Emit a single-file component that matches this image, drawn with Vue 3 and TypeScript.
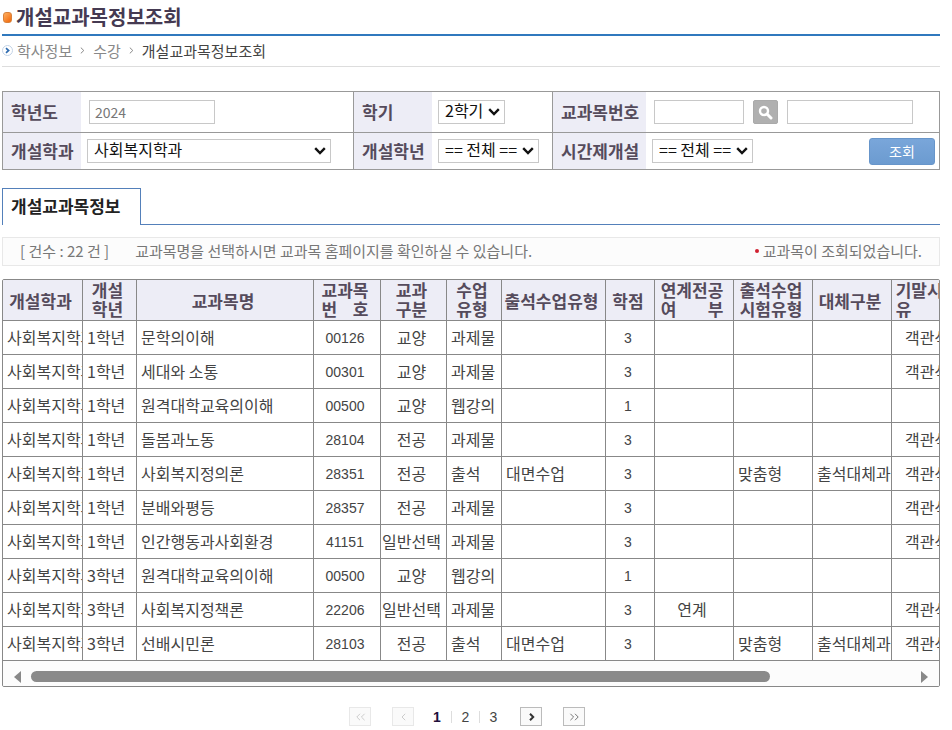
<script setup lang="ts">
import { computed, ref } from 'vue'

interface Course {
  dept: string
  grade: string
  name: string
  code: string
  category: string
  type: string
  attend: string
  credit: string
  linked: string
  exam: string
  substitute: string
  final: string
}

const DEPT = '사회복지학과'

function course(
  grade: string, name: string, code: string, category: string, type: string,
  attend: string, credit: string, linked: string, exam: string, substitute: string, final: string,
): Course {
  return { dept: DEPT, grade, name, code, category, type, attend, credit, linked, exam, substitute, final }
}

const courses: Course[] = [
  course('1학년', '문학의이해', '00126', '교양', '과제물', '', '3', '', '', '', '객관식'),
  course('1학년', '세대와 소통', '00301', '교양', '과제물', '', '3', '', '', '', '객관식'),
  course('1학년', '원격대학교육의이해', '00500', '교양', '웹강의', '', '1', '', '', '', ''),
  course('1학년', '돌봄과노동', '28104', '전공', '과제물', '', '3', '', '', '', '객관식'),
  course('1학년', '사회복지정의론', '28351', '전공', '출석', '대면수업', '3', '', '맞춤형', '출석대체과제물', '객관식'),
  course('1학년', '분배와평등', '28357', '전공', '과제물', '', '3', '', '', '', '객관식'),
  course('1학년', '인간행동과사회환경', '41151', '일반선택', '과제물', '', '3', '', '', '', '객관식'),
  course('3학년', '원격대학교육의이해', '00500', '교양', '웹강의', '', '1', '', '', '', ''),
  course('3학년', '사회복지정책론', '22206', '일반선택', '과제물', '', '3', '연계', '', '', '객관식'),
  course('3학년', '선배시민론', '28103', '전공', '출석', '대면수업', '3', '', '맞춤형', '출석대체과제물', '객관식'),
]

interface Column {
  key: keyof Course
  lines: string[]
  width: number
  justify?: boolean
  center?: boolean
  digits?: boolean
}

const columns: Column[] = [
  { key: 'dept', lines: ['개설학과'], width: 80 },
  { key: 'grade', lines: ['개설', '학년'], width: 54 },
  { key: 'name', lines: ['교과목명'], width: 177 },
  { key: 'code', lines: ['교과목', '번 호'], width: 67, justify: true, center: true, digits: true },
  { key: 'category', lines: ['교과', '구분'], width: 66, center: true },
  { key: 'type', lines: ['수업', '유형'], width: 55 },
  { key: 'attend', lines: ['출석수업유형'], width: 104 },
  { key: 'credit', lines: ['학점'], width: 49, center: true, digits: true },
  { key: 'linked', lines: ['연계전공', '여 부'], width: 79, justify: true, center: true },
  { key: 'exam', lines: ['출석수업', '시험유형'], width: 79 },
  { key: 'substitute', lines: ['대체구분'], width: 79 },
  { key: 'final', lines: ['기말시험', '유 형'], width: 75, justify: true, center: true },
]
const tableWidth = computed(() => columns.reduce((sum, c) => sum + c.width, 0))

const year = ref('2024')
const code = ref('')
const courseName = ref('')
const page = ref(1)
const viewport = ref<HTMLElement | null>(null)

function scrollTable(dx: number) {
  viewport.value?.scrollBy({ left: dx })
}
</script>

<template>
  <main class="page">
    <header>
      <h1 class="title"><span class="bullet"></span>개설교과목정보조회</h1>
      <nav class="crumbs" aria-label="현재 위치">
        <svg class="crumb-icon" width="11" height="11" viewBox="0 0 11 11" aria-hidden="true">
          <circle cx="5.5" cy="5.5" r="5" fill="#fff" stroke="#c3d3e6" />
          <path d="M4 3.2 6.6 5.5 4 7.8" fill="none" stroke="#2f6cb0" stroke-width="1.7" />
        </svg>
        <a href="#">학사정보</a>
        <svg class="sep" width="5" height="7" viewBox="0 0 5 7" aria-hidden="true"><path d="M.8.6 3.8 3.5.8 6.4" /></svg>
        <a href="#">수강</a>
        <svg class="sep" width="5" height="7" viewBox="0 0 5 7" aria-hidden="true"><path d="M.8.6 3.8 3.5.8 6.4" /></svg>
        <span class="current">개설교과목정보조회</span>
      </nav>
    </header>

    <form class="search" @submit.prevent>
      <div class="row first">
        <div class="field">
          <label for="year">학년도</label>
          <div class="control"><input id="year" v-model="year" class="text wide" type="text"></div>
        </div>
        <div class="field">
          <label for="term">학기</label>
          <div class="control"><select id="term" class="term"><option>2학기</option></select></div>
        </div>
        <div class="field long">
          <label for="code">교과목번호</label>
          <div class="control">
            <input id="code" v-model="code" class="text short" type="text">
            <button class="find" type="button" aria-label="검색">
              <svg width="15" height="15" viewBox="0 0 15 15" aria-hidden="true">
                <circle cx="6" cy="6" r="4" fill="none" stroke="#fff" stroke-width="2.4" />
                <path d="M9 9 13 13" stroke="#fff" stroke-width="3" stroke-linecap="round" />
              </svg>
            </button>
            <input v-model="courseName" class="text wide" type="text" aria-label="교과목명">
          </div>
        </div>
      </div>
      <div class="row">
        <div class="field">
          <label for="dept">개설학과</label>
          <div class="control"><select id="dept" class="dept"><option>사회복지학과</option></select></div>
        </div>
        <div class="field">
          <label for="grade">개설학년</label>
          <div class="control"><select id="grade" class="all"><option>== 전체 ==</option></select></div>
        </div>
        <div class="field long">
          <label for="part">시간제개설</label>
          <div class="control">
            <select id="part" class="all"><option>== 전체 ==</option></select>
            <button class="submit" type="submit">조회</button>
          </div>
        </div>
      </div>
    </form>

    <div class="tabs"><a class="tab" href="#">개설교과목정보</a></div>

    <div class="info">
      <span>[ 건수 : 22 건 ]</span>
      <span>교과목명을 선택하시면 교과목 홈페이지를 확인하실 수 있습니다.</span>
      <span class="status"><i class="dot"></i>교과목이 조회되었습니다.</span>
    </div>

    <section class="grid">
      <div ref="viewport" class="viewport">
        <table :style="{ width: tableWidth + 'px' }">
          <colgroup>
            <col v-for="c in columns" :key="c.key" :style="{ width: c.width + 'px' }">
          </colgroup>
          <thead>
            <tr>
              <th v-for="c in columns" :key="c.key" scope="col">
                <span class="head">
                  <span v-for="line in c.lines" :key="line" :class="{ justify: c.justify }">{{ line }}</span>
                </span>
              </th>
            </tr>
          </thead>
          <tbody>
            <tr v-for="(row, i) in courses" :key="i">
              <td v-for="c in columns" :key="c.key" :class="{ center: c.center, digits: c.digits }">{{ row[c.key] }}</td>
            </tr>
          </tbody>
        </table>
      </div>
      <div class="scroll">
        <button type="button" aria-label="왼쪽으로" @click="scrollTable(-40)">
          <svg width="7" height="12" viewBox="0 0 7 12" aria-hidden="true"><path d="M7 0v12L0 6z" /></svg>
        </button>
        <div class="track"><div class="thumb"></div></div>
        <button type="button" aria-label="오른쪽으로" @click="scrollTable(40)">
          <svg width="7" height="12" viewBox="0 0 7 12" aria-hidden="true"><path d="M0 0v12l7-6z" /></svg>
        </button>
      </div>
    </section>

    <nav class="pager" aria-label="페이지">
      <button class="step" type="button" disabled aria-label="처음">
        <svg width="11" height="8" viewBox="0 0 11 8"><path d="M5 .8 1.8 4 5 7.2M9.6.8 6.4 4l3.2 3.2" /></svg>
      </button>
      <button class="step" type="button" disabled aria-label="이전">
        <svg width="11" height="8" viewBox="0 0 11 8"><path d="M7.2.8 4 4l3.2 3.2" /></svg>
      </button>
      <div class="numbers">
        <a v-for="n in 3" :key="n" href="#" :class="{ on: n === page }" @click.prevent="page = n">{{ n }}</a>
      </div>
      <button class="step next" type="button" aria-label="다음">
        <svg width="11" height="8" viewBox="0 0 11 8"><path d="M4 .8 7.2 4 4 7.2" /></svg>
      </button>
      <button class="step last" type="button" aria-label="마지막">
        <svg width="11" height="8" viewBox="0 0 11 8"><path d="M1.4.8 4.6 4 1.4 7.2M6 .8 9.2 4 6 7.2" /></svg>
      </button>
    </nav>
  </main>
</template>

<style>
body {
  margin: 0;
  background: #fff;
}
</style>

<style scoped>
* {
  box-sizing: border-box;
}
.page {
  padding: 0 12px 0 2px;
  font-family: "Noto Sans CJK KR", sans-serif;
  font-size: 15px;
  color: #444;
}
a {
  color: inherit;
  text-decoration: none;
}
button,
input,
select {
  margin: 0;
  font-family: inherit;
}
.title {
  display: flex;
  align-items: center;
  gap: 4px;
  height: 36px;
  margin: 0;
  padding-left: 1px;
  border-bottom: 2px solid #3079be;
  font-size: 20px;
  line-height: 34px;
  font-weight: 700;
  color: #453a52;
}
.bullet {
  width: 9px;
  height: 11px;
  border: 1px solid #d8823c;
  border-radius: 3px;
  background: linear-gradient(135deg, #ffb060, #f0660a);
}
.crumbs {
  display: flex;
  align-items: center;
  height: 31px;
  padding-bottom: 1px;
  border-bottom: 1px solid #ddd;
  line-height: 28px;
  color: #888;
}
.crumb-icon {
  margin-right: 4px;
}
.sep {
  margin: 0 8px;
  fill: none;
  stroke: #888;
}
.current {
  color: #444;
}
.search {
  margin-top: 24px;
  border: 1px solid #999;
}
.row {
  display: grid;
  grid-template-columns: 351fr 199fr 386fr;
  height: 36px;
}
.first {
  height: 41px;
  border-bottom: 1px solid #999;
}
.field {
  display: flex;
  border-right: 1px solid #999;
}
.field:last-child {
  border-right: 0;
}
.field label {
  display: flex;
  align-items: center;
  flex: none;
  width: 78px;
  padding: 0 0 2px 8px;
  background: #ededf6;
  font-size: 17px;
  font-weight: 700;
  color: #554b5c;
  white-space: nowrap;
}
.field.long label {
  width: 93px;
}
.control {
  display: flex;
  align-items: center;
  flex: 1;
  min-width: 0;
  padding: 0 4px 0 6px;
}
.text {
  height: 24px;
  margin-left: 2px;
  padding: 0 5px;
  border: 1px solid #c8c8c8;
  font-size: 14px;
  color: #777;
}
.wide {
  width: 126px;
}
.short {
  width: 90px;
}
.find {
  display: flex;
  align-items: center;
  justify-content: center;
  width: 25px;
  height: 24px;
  margin: 0 7px 0 9px;
  padding: 0;
  border: 1px solid #aaa;
  border-radius: 2px;
  background: #b0b0b0;
}
select {
  appearance: none;
  height: 24px;
  padding: 0 0 4px 6px;
  border: 1px solid #c8c8c8;
  border-radius: 0;
  background: #fff url("data:image/svg+xml,%3Csvg xmlns='http://www.w3.org/2000/svg' width='12' height='8' viewBox='0 0 12 8'%3E%3Cpath d='M1.2 1.2 6 6 10.8 1.2' fill='none' stroke='%23111' stroke-width='2.4'/%3E%3C/svg%3E") no-repeat right 4px center;
  font-size: 16px;
  line-height: 18px;
  color: #111;
}
.term {
  width: 67px;
}
.dept {
  width: 244px;
}
.all {
  width: 101px;
}
.submit {
  width: 66px;
  height: 27px;
  margin-left: auto;
  padding: 0;
  border: 1px solid #6795ca;
  border-radius: 3px;
  background: linear-gradient(#79a6da, #6c9bd0);
  font-size: 14px;
  line-height: 22px;
  color: #fff;
}
.tabs {
  display: flex;
  margin-top: 18px;
}
.tabs::after {
  content: "";
  flex: 1;
  border-bottom: 1px solid #5480ba;
}
.tab {
  width: 139px;
  height: 37px;
  padding-left: 8px;
  border: 1px solid #5480ba;
  border-bottom: 0;
  font-size: 17px;
  line-height: 34px;
  font-weight: 700;
  color: #222;
}
.info {
  display: flex;
  gap: 26px;
  margin-top: 12px;
  padding: 0 17px 2px;
  border: 1px solid #e8e8e8;
  background: #fcfcfc;
  line-height: 25px;
  color: #777;
}
.status {
  display: flex;
  align-items: center;
  gap: 4px;
  margin-left: auto;
}
.dot {
  width: 4px;
  height: 4px;
  border-radius: 50%;
  background: #d02030;
}
.grid {
  margin-top: 13px;
  border: 1px solid #888;
  border-radius: 2px;
  overflow: hidden;
}
.viewport {
  overflow: hidden;
}
table {
  table-layout: fixed;
  border-collapse: separate;
  border-spacing: 0;
}
th,
td {
  border-right: 1px solid #888;
  border-bottom: 1px solid #888;
  white-space: nowrap;
}
th {
  height: 41px;
  padding: 0 4px 2px 0;
  background: #ededf6;
  font-size: 17px;
  line-height: 19px;
  font-weight: 700;
  color: #554b5c;
}
.head {
  display: inline-block;
  vertical-align: middle;
}
.head > span {
  display: block;
}
.justify {
  text-align-last: justify;
}
td {
  height: 34px;
  padding: 0 0 2px 4px;
  overflow: hidden;
  font-size: 16px;
  line-height: 24px;
  color: #444;
}
.center {
  padding: 0 4px 2px 0;
  text-align: center;
}
.digits {
  padding-bottom: 0;
  font-family: "Liberation Sans", sans-serif;
  font-size: 14px;
}
.scroll {
  display: flex;
  align-items: center;
  gap: 10px;
  height: 25px;
  padding: 6px 11px 0;
  background: #fcfcfc;
}
.scroll button {
  display: flex;
  padding: 0;
  border: 0;
  background: none;
}
.scroll svg {
  fill: #888;
}
.track {
  flex: 1;
}
.thumb {
  width: 84%;
  height: 11px;
  border-radius: 6px;
  background: #8a8a8a;
}
.pager {
  display: flex;
  align-items: center;
  justify-content: center;
  gap: 21px;
  margin-top: 20px;
  padding-right: 8px;
}
.step {
  display: flex;
  align-items: center;
  justify-content: center;
  width: 22px;
  height: 19px;
  padding: 0;
  border: 1px solid #bbb;
  background: #fafafa;
}
.step:disabled {
  border-color: #e8e8e8;
}
.step path {
  fill: none;
  stroke: #777;
}
.step:disabled path {
  stroke: #ccc;
}
.next path {
  stroke: #333;
  stroke-width: 2;
}
.numbers {
  display: flex;
  align-items: center;
  margin: 0 -8px 0 -12px;
}
.numbers a {
  width: 28px;
  font-family: "Liberation Sans", sans-serif;
  font-size: 14px;
  line-height: 12px;
  text-align: center;
}
.numbers a + a {
  border-left: 1px solid #ddd;
}
.numbers .on {
  font-weight: 700;
  color: #21103c;
}
</style>
